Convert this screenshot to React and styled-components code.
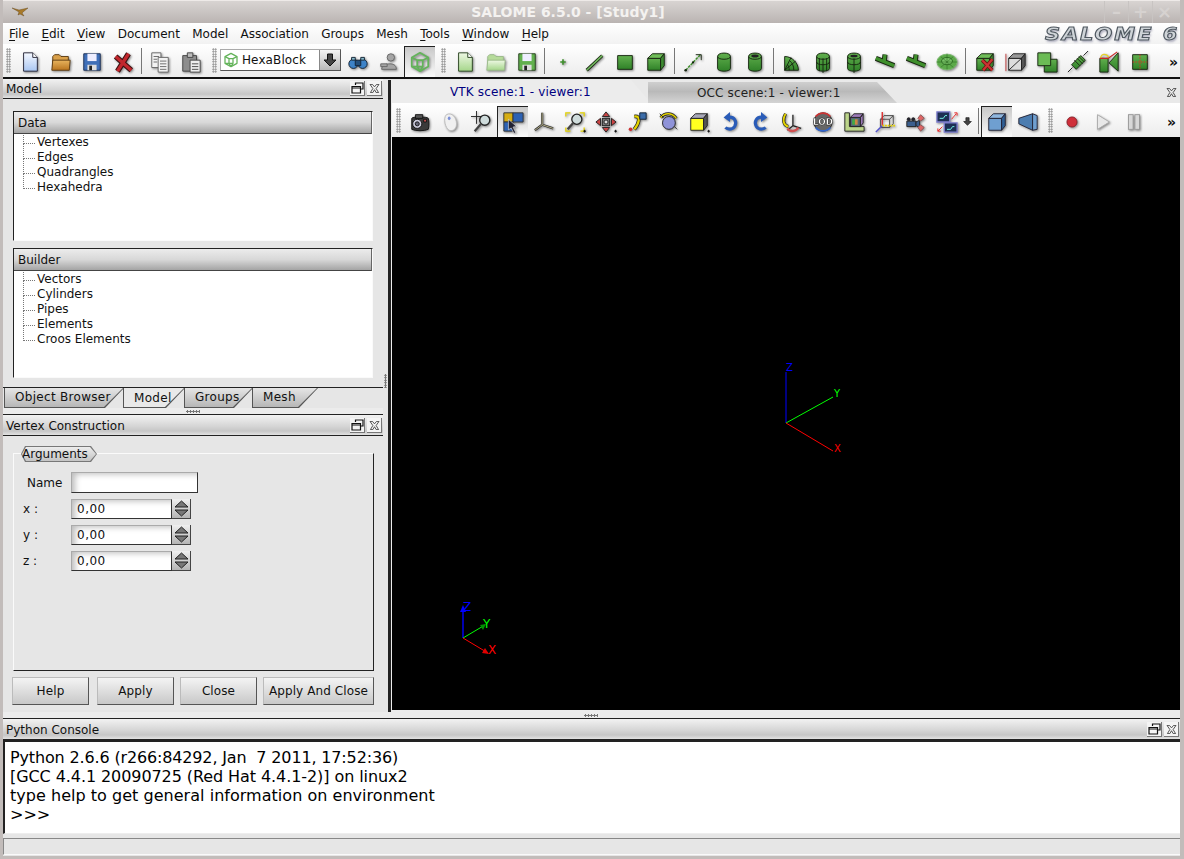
import React from "react";
import styled, { createGlobalStyle } from "styled-components";

const Global = createGlobalStyle`
  html, body { margin: 0; padding: 0; background: #c2bcba; }
  * { box-sizing: border-box; }
  #root { width: 1184px; height: 859px; overflow: hidden; }
`;

const Window = styled.div`
  width: 1184px;
  height: 859px;
  display: flex;
  flex-direction: column;
  background: #e6e6e6;
  font-family: "DejaVu Sans", sans-serif;
  font-size: 12px;
  color: #111;
  border-left: 3px solid #c2bcba;
  border-right: 4px solid #c2bcba;
  border-bottom: 3px solid #c2bcba;
  overflow: hidden;
`;

const TitleBar = styled.div`
  height: 23px;
  margin: 0 -4px 0 -3px;
  padding-right: 48px;
  flex: none;
  display: flex;
  align-items: center;
  position: relative;
  justify-content: center;
  background: linear-gradient(#d8d4d2, #bab4b2);
  border-top: 1px solid #eeeae8;
`;

const TitleText = styled.div`
  font-weight: bold;
  font-size: 14px;
  color: #f4f2f0;
`;

const TitleIcon = styled.div`
  position: absolute;
  left: 12px;
  top: 3px;
  line-height: 0;
`;

const WinButtons = styled.div`
  position: absolute;
  right: 8px;
  top: 0;
  display: flex;
`;

const WinButton = styled.div`
  width: 24px;
  height: 22px;
  text-align: center;
  font-size: 18px;
  line-height: 22px;
  font-weight: bold;
  color: #d6d2d0;
  border-left: 1px solid #c8c4c2;
`;

const MenuBar = styled.div`
  height: 21px;
  flex: none;
  display: flex;
  align-items: center;
  gap: 12.3px;
  padding-left: 6px;
  background: linear-gradient(#ffffff, #f2f2f2);
`;

const MenuItem = styled.span`
  line-height: 18px;
  u { text-underline-offset: 2px; }
`;

const Logo = styled.div`
  margin-left: auto;
  margin-right: 1px;
  font-weight: bold;
  font-style: italic;
  font-size: 17px;
  letter-spacing: 1.6px;
  white-space: nowrap;
  color: #cfd4d8;
  -webkit-text-stroke: 1px #4f5860;
  text-shadow: 1px 2px 2px #aab;
  transform: scaleX(1.23);
  transform-origin: right center;
`;

const Toolbar = styled.div`
  flex: none;
  height: ${(p) => p.$height}px;
  display: flex;
  align-items: center;
  padding-left: ${(p) => p.$pad}px;
  padding-top: 2px;
  background: linear-gradient(#ffffff, #ececec);
  border-bottom: ${(p) => (p.$line ? "2px solid #111" : "none")};
`;

const ToolButton = styled.div`
  width: 31px;
  height: 100%;
  flex: none;
  display: flex;
  align-items: center;
  justify-content: center;
  ${(p) =>
    p.$active &&
    `background: linear-gradient(#c8c8c8, #fafafa);
     border-left: 1px solid #222;
     border-top: 1px solid #222;`}
  svg { filter: drop-shadow(1px 1px 1px rgba(0, 0, 0, 0.45)); }
`;

const Sep = styled.div`
  flex: none;
  width: ${(p) => p.$w}px;
  height: 26px;
  margin-bottom: 2px;
  display: flex;
  justify-content: center;
  &::before { content: ""; width: 1px; background: #777; }
`;

const Grip = styled.div`
  flex: none;
  width: 5px;
  height: 25px;
  margin: 0 3px 2px ${(p) => p.$left || 0}px;
  background-image: radial-gradient(#8a8a8a 45%, transparent 55%);
  background-size: 2.5px 2.5px;
`;

const Combo = styled.div`
  width: 121px;
  height: 22px;
  flex: none;
  display: flex;
  align-items: stretch;
  background: #fff;
  border: 1px solid #999;
  border-color: #aaa #555 #555 #aaa;
  margin: 0 1px 4px 0;
`;

const ComboLabel = styled.div`
  flex: 1;
  display: flex;
  align-items: center;
  gap: 3px;
  padding-left: 2px;
  letter-spacing: 0.1px;
`;

const ComboArrow = styled.div`
  width: 21px;
  display: flex;
  align-items: center;
  justify-content: center;
  background: linear-gradient(#f4f4f4, #b8b8b8);
  border-left: 1px solid #888;
`;

const ToolSmall = styled.div`
  width: 10px;
  flex: none;
  display: flex;
  justify-content: center;
  margin-right: 3px;
`;

const More = styled.div`
  margin-left: auto;
  margin-right: ${(p) => p.$right}px;
  font-size: 14px;
  font-weight: bold;
  letter-spacing: -1px;
`;

const Workspace = styled.div`
  height: 633px;
  flex: none;
  display: flex;
`;

const LeftColumn = styled.div`
  width: 380px;
  flex: none;
  display: flex;
  flex-direction: column;
`;

const VerticalHandle = styled.div`
  width: 5px;
  flex: none;
  display: flex;
  align-items: center;
  justify-content: center;
  padding-bottom: 30px;
  &::before {
    content: "";
    width: 3px;
    height: 14px;
    background-image: radial-gradient(#777 50%, transparent 55%);
    background-size: 2.5px 2.5px;
  }
`;

const DockTitle = styled.div`
  height: ${(p) => p.$height}px;
  flex: none;
  display: flex;
  align-items: center;
  justify-content: space-between;
  padding: ${(p) => (p.$flush ? 0 : 1)}px 1px 0 3px;
  border-top: ${(p) => (p.$flush ? "none" : "1px solid #222")};
  border-bottom: 1px solid #222;
  background: linear-gradient(#f2f2f2, #d6d6d6 55%, #c6c6c6 80%, #e2e2e2);
`;

const DockButtons = styled.div`
  display: flex;
  gap: 2px;
  line-height: 0;
`;

const DockButton = styled.div`
  width: 15px;
  height: 15px;
  display: flex;
  align-items: center;
  justify-content: center;
  background: #f4f4f4;
  border-right: 1px solid #777;
  border-bottom: 1px solid #777;
`;

const ModelBody = styled.div`
  padding: 12px 10px 0 10px;
  display: flex;
  flex-direction: column;
  gap: 7px;
`;

const ListBox = styled.div`
  height: 130px;
  background: #fff;
  border: 1px solid #222;
  border-right-color: #fafafa;
  border-bottom-color: #fafafa;
`;

const ListHeader = styled.div`
  height: 22px;
  padding-left: 4px;
  display: flex;
  align-items: center;
  background: linear-gradient(#ececec, #d8d8d8 50%, #a4a4a4);
  border-bottom: 1px solid #444;
  border-right: 1px solid #666;
`;

const TreeList = styled.div`
  padding-top: 1px;
`;

const TreeItem = styled.div`
  height: 15px;
  line-height: 15px;
  padding-left: 23px;
  position: relative;
  &::before {
    content: "";
    position: absolute;
    left: 9px;
    top: ${(p) => (p.$first ? 0 : -7)}px;
    width: 11px;
    height: ${(p) => (p.$first ? 8 : 15)}px;
    border-left: 1px dotted #777;
    border-bottom: 1px dotted #777;
  }
`;

const TabRow = styled.div`
  margin-top: 9px;
  height: 21px;
  flex: none;
  display: flex;
  align-items: flex-start;
  border-top: 1px solid #222;
  padding-left: 1px;
`;

const Tab = styled.div`
  width: ${(p) => p.$w}px;
  height: 20px;
  margin-right: -1px;
  position: relative;
  background: #555;
  clip-path: polygon(0 0, 100% 0, calc(100% - 19px) 100%, 0 100%);
  &::before {
    content: "";
    position: absolute;
    inset: 0 0 1px 1px;
    background: ${(p) => (p.$on ? "#e9e9e9" : "linear-gradient(#e6e6e6, #b6b6b6)")};
    clip-path: polygon(0 0, calc(100% - 1px) 0, calc(100% - 20px) 100%, 0 100%);
  }
`;

const TabText = styled.span`
  position: relative;
  display: block;
  padding-left: ${(p) => p.$pad}px;
  line-height: 18px;
  letter-spacing: 0.3px;
  margin-top: ${(p) => (p.$on ? 1 : 0)}px;
`;

const DotHandle = styled.div`
  height: 6px;
  flex: none;
  display: flex;
  align-items: center;
  justify-content: ${(p) => (p.$center ? "center" : "flex-start")};
  padding-left: ${(p) => p.$pad || 0}px;
  background: #ececec;
  &::before {
    content: "";
    width: 14px;
    height: 3px;
    background-image: radial-gradient(#777 50%, transparent 55%);
    background-size: 3px 2.5px;
  }
`;

const FormBody = styled.div`
  padding: 17px 9px 0 10px;
  flex: 1;
  display: flex;
  flex-direction: column;
`;

const GroupBox = styled.div`
  height: 218px;
  position: relative;
  padding-top: 18px;
  border: 1px solid #222;
  border-top-color: #fafafa;
  border-left-color: #fafafa;
  display: flex;
  flex-direction: column;
  gap: 6px;
`;

const Legend = styled.div`
  position: absolute;
  left: 7px;
  top: -8px;
  width: 76px;
  height: 16px;
  background: #777;
  clip-path: polygon(4px 0, calc(100% - 6px) 0, 100% 50%, calc(100% - 6px) 100%, 4px 100%, 0 50%);
  &::before {
    content: "";
    position: absolute;
    inset: 1px;
    background: linear-gradient(#ececec, #c4c4c4);
    clip-path: polygon(4px 0, calc(100% - 6px) 0, 100% 50%, calc(100% - 6px) 100%, 4px 100%, 0 50%);
  }
`;

const LegendText = styled.span`
  position: relative;
  display: block;
  line-height: 17px;
  padding-left: 1px;
`;

const FormRow = styled.div`
  display: flex;
  align-items: center;
  height: ${(p) => p.$h}px;
`;

const FormLabel = styled.div`
  width: 57px;
  padding-left: ${(p) => p.$pad}px;
  flex: none;
`;

const TextField = styled.div`
  width: ${(p) => p.$w}px;
  height: 100%;
  padding-left: 5px;
  display: flex;
  align-items: center;
  background: #fff;
  letter-spacing: 0.5px;
  border: 1px solid;
  border-color: #aaa #333 #333 #aaa;
  box-shadow: inset 8px 6px 6px -5px #bbb;
`;

const SpinButtons = styled.div`
  width: 19px;
  height: 100%;
  background: linear-gradient(#f0f0f0, #b4b4b4);
  border-right: 1px solid #444;
  border-bottom: 1px solid #444;
  display: flex;
  align-items: center;
  justify-content: center;
`;

const ButtonRow = styled.div`
  margin-top: 6px;
  margin-left: -1px;
  display: flex;
  gap: 6px;
  height: 28px;
`;

const PushButton = styled.div`
  width: ${(p) => p.$w}px;
  margin-left: ${(p) => p.$ml || 0}px;
  display: flex;
  align-items: center;
  justify-content: center;
  letter-spacing: 0.1px;
  background: linear-gradient(#f4f4f4, #c8c8c8);
  border: 1px solid;
  border-color: #bbb #555 #555 #bbb;
`;

const ViewerColumn = styled.div`
  flex: 1;
  display: flex;
  flex-direction: column;
  border-left: 3px solid #222;
  margin-top: 1px;
  padding: 0 0 2px 1px;
  background: #ececec;
  min-width: 0;
`;

const ViewTabs = styled.div`
  height: 24px;
  flex: none;
  display: flex;
  border-bottom: 1px solid #fff;
  background: #e9e9e9;
`;

const ViewTab = styled.div`
  width: ${(p) => p.$w}px;
  margin-right: ${(p) => p.$mr}px;
  margin-top: ${(p) => (p.$on ? 0 : 2)}px;
  padding-left: ${(p) => p.$pad}px;
  line-height: ${(p) => (p.$on ? 24 : 22)}px;
  letter-spacing: 0.15px;
  color: ${(p) => (p.$on ? "#000080" : "#222")};
  background: ${(p) => (p.$on ? "#ececec" : "linear-gradient(#cfcfcf, #b9b9b9 45%, #d4d4d4)")};
  clip-path: polygon(0 0, calc(100% - 20px) 0, 100% 100%, 0 100%);
`;

const ViewClose = styled.div`
  margin-left: auto;
  margin-right: 3px;
  margin-top: 8px;
  line-height: 0;
`;

const Canvas = styled.div`
  flex: 1;
  background: #000;
  line-height: 0;
  svg { display: block; }
`;

const ConsoleText = styled.div`
  height: 94px;
  flex: none;
  padding: 6px 0 0 5px;
  background: #fff;
  border-top: 2px solid #222;
  border-left: 2px solid #222;
  border-bottom: 1px solid #eee;
  font-size: 16px;
  line-height: 19px;
  color: #000;
  white-space: pre;
`;

const ConsoleLine = styled.div`
  letter-spacing: ${(p) => p.$ls || 0}px;
`;

const StatusBar = styled.div`
  height: 17px;
  flex: none;
  margin-top: 4px;
  background: #e6e6e6;
  border-top: 1px solid #888;
  border-bottom: 1px solid #fafafa;
  border-left: 1px solid #888;
`;

// icon helpers
const K = "#16240f";
const stroke = { stroke: K, strokeWidth: 1, strokeLinejoin: "round" };
const gp = { ...stroke, fill: "url(#gr)" };

const page = (fill, line) => (
  <>
    <path d="M5 2h10l5 5v15H5z" fill={fill} stroke={line} />
    <path d="M15 2v5h5" fill="#fff" stroke={line} />
  </>
);
const folder = (a, b, line) => (
  <>
    <path d="M3 20V6l2-2h5l2 2h8v14z" fill={a} stroke={line} />
    <path d="M2 21l1-11h19l-1 11z" fill={b} stroke={line} />
  </>
);
const floppy = (fill, line) => (
  <>
    <path d="M3 3h18v18H3z" fill={fill} stroke={line} />
    <path d="M7 3h10v8H7z" fill="#eef" />
    <path d="M7 15h10v6H7z" fill="#ddd" />
    <path d="M9 16h3v5H9z" fill="#222" />
  </>
);
const cube = (front, top, side, line) => (
  <>
    <path d="M3 8h14v13H3z" fill={front} stroke={line} />
    <path d="M3 8l5-5h13l-4 5z" fill={top} stroke={line} />
    <path d="M17 8l4-5v13l-4 5z" fill={side} stroke={line} />
  </>
);
const cyl = (extra) => (
  <>
    <path d="M5 6c0-5 14-5 14 0v13c0 4-14 4-14 0z" {...gp} />
    <path d="M5 6c0 4 14 4 14 0" fill="none" stroke={K} />
    {extra}
  </>
);
const hexa = (
  <g fill="none" stroke="#63b35a" strokeWidth="1.9" strokeLinejoin="round">
    <path d="M3 7l9-5 9 5v10l-9 5-9-5z" />
    <path d="M3 7l6 3h6l6-3M9 10v7l-6 0M15 10v7h-6M15 17l-3 5M9 17l3 5M12 2v0" />
  </g>
);
const pipeT = (
  <g fill="none">
    <path d="M2 8l20 8M11 12l1-8" stroke={K} strokeWidth="5.5" />
    <path d="M2 8l20 8M11 12l1-8" stroke="#3f8f2c" strokeWidth="3.6" />
  </g>
);
const redX = (
  <g fill="none">
    <path d="M10 21l10-12M9 10l11 11" stroke="#611" strokeWidth="4" />
    <path d="M10 21l10-12M9 10l11 11" stroke="#c33" strokeWidth="2.4" />
  </g>
);
const plusDot = <path d="M21 22h3M22.500 20.500v3" stroke="#000" strokeWidth="1" />;

const ICONS = {
  new: page("url(#pb)", "#223"),
  open: folder("#d9a04a", "url(#or)", "#5b3a10"),
  save: floppy("#3f6fb8", "#1b2f55"),
  close: (
    <g fill="none">
      <path d="M6 22L18 3M4 6l17 15" stroke="#3a1010" strokeWidth="6" />
      <path d="M6 22L18 3M4 6l17 15" stroke="#c2272d" strokeWidth="3.6" />
    </g>
  ),
  copy: (
    <g fill="#f2f2f2" stroke="#666">
      <path d="M3 2h10v16H3z" />
      <path d="M10 7h11v16H10z" />
      <path d="M12 11h7M12 14h7M12 17h7M12 20h7M5 6h6M5 9h4M5 12h4" fill="none" />
    </g>
  ),
  paste: (
    <g stroke="#444">
      <path d="M3 5h15v17H3z" fill="#8d8d8d" />
      <path d="M8 2h6v5H8z" fill="#bbb" />
      <path d="M11 10h11v13H11z" fill="#eee" />
      <path d="M13 14h7M13 17h7M13 20h7" fill="none" />
    </g>
  ),
  bino: (
    <g stroke="#123" fill="#3d83c8">
      <circle cx="7" cy="14" r="5" />
      <circle cx="17" cy="14" r="5" />
      <path d="M9 10h6v6H9z" fill="#24507c" />
      <path d="M5 7h4v3H5zM15 7h4v3h-4z" fill="#8bc" />
    </g>
  ),
  person: (
    <g stroke="#666" fill="#a5a5a5">
      <circle cx="14" cy="7" r="4" />
      <path d="M4 20c0-5 6-6 9-6s7 1 7 6z" />
      <path d="M3 14h7v3H3z" />
    </g>
  ),
  hexa,
  gpage: page("url(#lg)", "#25401c"),
  gfolder: folder("#b6db9a", "url(#lg)", "#9ab98a"),
  gsave: floppy("#62b04e", "#25401c"),
  point: <path d="M12 9v6M9 12h6" stroke="#3f8f2c" strokeWidth="1.8" />,
  line: (
    <g fill="none">
      <path d="M4 21L21 5" stroke={K} strokeWidth="3.4" />
      <path d="M4 21L21 5" stroke="#73b85f" strokeWidth="1.8" />
    </g>
  ),
  square: <path d="M4 5h16v15H4z" {...gp} />,
  cube: cube("url(#gr)", "#6fbd58", "#3c8a30", K),
  vector: (
    <g fill="none">
      <path d="M4 21L20 4" stroke="#3f8f2c" strokeWidth="1.6" strokeDasharray="3 1" />
      <path d="M15 4h6v6" stroke={K} />
      <circle cx="4" cy="21" r="1.4" fill={K} />
      <circle cx="12" cy="12.500" r="1.200" fill={K} />
    </g>
  ),
  cyl: cyl(),
  cylHole: cyl(<ellipse cx="12" cy="5.500" rx="4" ry="1.600" fill="#222" />),
  quarter: (
    <g>
      <path d="M4 21V6c8 0 15 7 15 15z" {...gp} />
      <path d="M4 21l12-10M4 21l7-14M9 21c0-3-1-5-2-6M14 21c0-5-2-8-4-10" fill="none" stroke={K} />
    </g>
  ),
  cylGrid: cyl(<path d="M5 12c0 4 14 4 14 0M12 8v16M8 8v14M16 8v14" fill="none" stroke={K} />),
  cylGridHole: cyl(
    <>
      <ellipse cx="12" cy="5.500" rx="4" ry="1.400" fill="#222" />
      <path d="M5 12c0 4 14 4 14 0M12 8v16" fill="none" stroke={K} />
    </>
  ),
  pipeT,
  ellipsoid: (
    <g>
      <ellipse cx="12" cy="12" rx="11" ry="8.500" fill="#5caa4a" stroke="#7ab96c" />
      <ellipse cx="12" cy="11" rx="6" ry="4" fill="#79c268" stroke="#2c6a22" />
      <path d="M1 12h22M12 3v17M5 6l14 12M19 6L5 18" fill="none" stroke="#2c6a22" strokeWidth="0.6" />
    </g>
  ),
  cubeX: (
    <>
      {cube("url(#gr)", "#6fbd58", "#3c8a30", K)}
      {redX}
    </>
  ),
  split: (
    <g stroke="#222">
      <path d="M4 8h14v13H4z" fill="#ddd" />
      <path d="M4 8l5-5h13l-4 5z" fill="#999" />
      <path d="M18 8l4-5v13l-4 5z" fill="#555" />
      <path d="M4 21L18 8" />
      <path d="M1 3v19" stroke="#b33" />
    </g>
  ),
  twoSq: (
    <g>
      <path d="M9 9h14v14H9z" {...gp} />
      <path d="M2 2h14v14H2z" fill="#6bbb55" stroke={K} />
    </g>
  ),
  pipeFan: (
    <g>
      <path d="M5 15L15 5l5 5-10 10z" {...gp} />
      <path d="M8 10l6 6M11 8l6 6M13 6l6 6" stroke={K} fill="none" />
      <path d="M1 23l5-5M18 5l5-5" stroke="#111" />
    </g>
  ),
  lshape: (
    <g>
      <path d="M2 8h9v15H2z" {...gp} />
      <path d="M12 13L22 2v20z" {...gp} />
      <path d="M3 8c0-5 6-6 9-1" fill="none" stroke="#e6d22a" strokeWidth="1.4" />
      <path d="M2 8h9l10-7" fill="none" stroke="#c22" strokeWidth="1.2" />
    </g>
  ),
  sqCross: (
    <g>
      <path d="M4 4h16v16H4z" {...gp} />
      <path d="M4 12h16M12 4v16" stroke="#e22" strokeDasharray="1.5 1.5" fill="none" />
    </g>
  ),
  camera: (
    <g stroke="#111">
      <path d="M3 8c0-2 17-2 18 0 1 3 1 9 0 12-4 2-14 2-18 0z" fill="#3a3a3a" />
      <circle cx="9" cy="14" r="5" fill="#ccd" />
      <circle cx="9" cy="14" r="2.200" fill="#667" />
      <path d="M7 4h8v4H7z" fill="#555" />
      <path d="M16 9h3v3h-3z" fill="#c55" />
    </g>
  ),
  mouse: (
    <g>
      <path d="M7 4c6-3 11 3 11 10 0 7-5 8-8 7-4-2-7-13-3-17z" fill="#f0f0f0" stroke="#bbb" />
      <ellipse cx="10" cy="8" rx="1.500" ry="2" fill="#7b8fd6" />
    </g>
  ),
  crossZoom: (
    <g fill="none" stroke="#222">
      <path d="M0 6h14M6 0v14" />
      <circle cx="15" cy="10" r="5.500" fill="#cfdcdc" strokeWidth="1.500" />
      <path d="M11 14l-7 8" strokeWidth="2.400" stroke="#444" />
    </g>
  ),
  select: (
    <g>
      <path d="M2 2h10v10H2z" fill="#d6ad12" stroke="#333" />
      <path d="M12 2h11v10H12z" fill="#2d62b4" stroke="#333" />
      <path d="M2 12h10v10H2z" fill="#2d62b4" stroke="#333" />
      <path d="M7 9l9 8-4 .5 3 6-2 1-3-6-3 2z" fill="#223" stroke="#fff" strokeWidth="0.6" />
    </g>
  ),
  trihedron: (
    <g fill="none">
      <path d="M10 2v13L2 21M10 15l12 4" stroke="#333" strokeWidth="2.400" />
      <path d="M10 2v13L2 21M10 15l12 4" stroke="#b9b38a" strokeWidth="1" />
    </g>
  ),
  zoomRect: (
    <g fill="none">
      <path d="M2 6V2h5M17 2h5v4M2 18v4h5M22 18v4h-4" stroke="#e3d200" strokeWidth="1.400" />
      <circle cx="14" cy="9" r="5.500" fill="#cfdcdc" stroke="#222" strokeWidth="1.400" />
      <path d="M10 13l-6 7" stroke="#444" strokeWidth="2.600" />
      {plusDot}
    </g>
  ),
  pan: (
    <g stroke="#222">
      <path d="M12 1l4 5h-8zM12 23l4-5H8zM1 12l5-4v8zM23 12l-5-4v8z" fill="#c44" />
      <rect x="8" y="8" width="8" height="8" fill="#777" />
      <circle cx="12" cy="12" r="2.200" fill="#ddd" />
      {plusDot}
    </g>
  ),
  rotatePt: (
    <g>
      <path d="M9 6c8-1 5 8 0 14" fill="none" stroke="#222" strokeWidth="4" />
      <path d="M9 6c8-1 5 8 0 14" fill="none" stroke="#e3d200" strokeWidth="2.400" />
      <path d="M15 2h7v7h-7z" fill="#3b6ca8" stroke="#123" />
      <circle cx="5" cy="20" r="2" fill="#c33" />
    </g>
  ),
  sphere: (
    <g>
      <circle cx="13" cy="13" r="7" fill="#8f93d8" stroke="#222" />
      <path d="M4 7c5-6 13-5 17 1" fill="none" stroke="#222" strokeWidth="3.400" />
      <path d="M4 7c5-6 13-5 17 1" fill="none" stroke="#e3d200" strokeWidth="1.800" />
      <path d="M3 3l4 4M22 20l-3-3" stroke="#222" />
    </g>
  ),
  cubeY: (
    <>
      {cube("#ffff20", "#a8a8b8", "#555", "#222")}
      {plusDot}
    </>
  ),
  undo: (
    <g fill="none">
      <path d="M9 7c8-2 11 5 8 10-3 4-8 3-10 1" stroke="#2a5cb8" strokeWidth="3.400" />
      <path d="M12 1L5 7l7 5z" fill="#2a5cb8" />
    </g>
  ),
  redo: (
    <g fill="none">
      <path d="M15 7c-8-2-11 5-8 10 3 4 8 3 10 1" stroke="#2a5cb8" strokeWidth="3.400" />
      <path d="M12 1l7 6-7 5z" fill="#2a5cb8" />
    </g>
  ),
  rotAxes: (
    <g fill="none">
      <path d="M5 3C1 10 3 16 8 17" stroke="#222" strokeWidth="3.400" />
      <path d="M5 3C1 10 3 16 8 17" stroke="#e3d200" strokeWidth="2" />
      <path d="M13 4v12l-6 5M13 16l9 3" stroke="#222" strokeWidth="1.400" />
      <path d="M7 19c3 4 9 4 12-1" stroke="#d05050" strokeWidth="2.600" />
    </g>
  ),
  lod: (
    <g>
      <circle cx="12" cy="12" r="10" fill="#666" stroke="#222" />
      <path d="M4 6c4-5 12-5 16 0" stroke="#c33" strokeWidth="2" fill="none" />
      <path d="M4 18c4 5 12 5 16 0" stroke="#36c" strokeWidth="2" fill="none" />
      <text x="12" y="15.500" textAnchor="middle" fontSize="9.500" fontWeight="bold" fontFamily="DejaVu Sans, sans-serif" fill="#fff" stroke="#000" strokeWidth="0.4">LOD</text>
    </g>
  ),
  ruler: (
    <g>
      <path d="M2 2h5v15h16v5H2z" fill="#bcd58a" stroke="#222" />
      <path d="M8 7h11v10H8z" fill="#567" stroke="#222" />
      <path d="M8 7l4-4h10l-3 4zM19 7l3-4v10l-3 4z" fill="#9b7ab8" stroke="#222" />
      <path d="M10 9h3v6h-3z" fill="#4a4" />
      <path d="M13 9h3v6h-3z" fill="#c84" />
    </g>
  ),
  clip: (
    <g fill="none">
      <path d="M7 9h10v9H7zM7 9l4-4h10l-4 4M17 18l4-4V5" stroke="#444" />
      <path d="M9 1v15" stroke="#d22" strokeWidth="1.400" />
      <path d="M9 16h14" stroke="#e6d200" strokeWidth="2" strokeDasharray="2 1" />
      <path d="M9 16L2 23" stroke="#55c" strokeWidth="1.600" />
    </g>
  ),
  cam2: (
    <g stroke="#222">
      <path d="M2 11h10v6H2z" fill="#3b5f8e" />
      <path d="M12 12l4-2v8l-4-2z" fill="#3b5f8e" />
      <circle cx="4" cy="9" r="1.600" fill="#223" />
      <circle cx="9" cy="9" r="1.600" fill="#223" />
      <path d="M17 4l4 4-4 3-3-3zM17 15l4 3-4 4-3-4z" fill="#d66" stroke="#855" />
    </g>
  ),
  squares: (
    <g>
      <path d="M1 1h14v11H1z" fill="#1d2f52" stroke="#7f7fd0" strokeWidth="1.400" />
      <path d="M9 13h14v10H9z" fill="#1d2f52" stroke="#7f7fd0" strokeWidth="1.400" />
      <path d="M4 8h4l2-3h2M12 20h4l2-3h2" stroke="#7fe" fill="none" />
      <path d="M17 9l5-6M20 2h3v3M2 22l5-5M2 19v3h3" stroke="#e22" fill="none" />
    </g>
  ),
  blueCube: cube("#6f9fd0", "#8fb6de", "#2f5f94", "#223"),
  bluePersp: (
    <g stroke="#223">
      <path d="M2 8l15-5v18L2 14z" fill="#4c7db0" />
      <path d="M17 3l5 2v15l-5 1z" fill="#6f9fd0" />
    </g>
  ),
  rec: <circle cx="12" cy="12" r="5.500" fill="#cf2f3a" stroke="#8a2028" />,
  play: <path d="M6 4l13 8-13 8z" fill="#e8e8e8" stroke="#aaa" />,
  pause: (
    <g fill="#d8d8d8" stroke="#999">
      <rect x="6" y="4" width="5" height="16" />
      <rect x="13" y="4" width="5" height="16" />
    </g>
  ),
};

const Defs = () => (
  <svg width="0" height="0" style={{ position: "absolute" }}>
    <defs>
      <linearGradient id="gr" x1="0" y1="0" x2="0" y2="1">
        <stop offset="0" stopColor="#62b04e" />
        <stop offset="1" stopColor="#2f8128" />
      </linearGradient>
      <linearGradient id="lg" x1="0" y1="0" x2="0" y2="1">
        <stop offset="0" stopColor="#eef8e4" />
        <stop offset="1" stopColor="#a5d68a" />
      </linearGradient>
      <linearGradient id="pb" x1="0" y1="0" x2="0" y2="1">
        <stop offset="0" stopColor="#f6f9ff" />
        <stop offset="1" stopColor="#a9c6f2" />
      </linearGradient>
      <linearGradient id="or" x1="0" y1="0" x2="0" y2="1">
        <stop offset="0" stopColor="#e8b45e" />
        <stop offset="1" stopColor="#b9741e" />
      </linearGradient>
    </defs>
  </svg>
);

const Icon = ({ name, size = 22 }) => (
  <svg width={size} height={size} viewBox="0 0 24 24">
    {ICONS[name]}
  </svg>
);

const FloatIcon = () => (
  <svg width="13" height="13" viewBox="0 0 13 13" fill="none" stroke="#111" strokeWidth="1.200">
    <path d="M4.500 3V1h7.500v6h-3M1 4.500h8.500V11H1zM1 6h8.500" />
  </svg>
);

const CloseIcon = () => (
  <svg width="11" height="9" viewBox="0 0 13 11" fill="none" stroke="#333">
    <path d="M1 .5h3l2.500 3 2.500-3h3L8.500 5.500l3 5h-3L6.500 7l-2 3.500h-3l3-5z" />
  </svg>
);

const DownArrow = ({ size = 14 }) => (
  <svg width={size} height={size} viewBox="0 0 14 14">
    <path d="M4.500 1h5v6H13l-6 6-6-6h3.500z" fill="#444" stroke="#111" />
  </svg>
);

const SpinArrows = () => (
  <svg width="15" height="17" viewBox="0 0 15 17">
    <path d="M7.500 1L14 7H1z" fill="#777" stroke="#222" />
    <path d="M7.500 16L14 10H1z" fill="#777" stroke="#222" />
  </svg>
);

const BirdIcon = () => (
  <svg width="16" height="16" viewBox="0 0 16 16">
    <path d="M0 4l7 2 9-2-5 4-1 1 2 3-4-2-2 1 1-3z" fill="#a87a2a" stroke="#5a3c10" strokeWidth="0.4" />
  </svg>
);

const Axes = ({ o, z, y, x, labels, heavy }) => (
  <g fontFamily="DejaVu Sans, sans-serif" fontSize={heavy ? 12 : 10}>
    <path d={`M${o[0]} ${o[1]}L${z[0]} ${z[1]}`} stroke="#0000ff" strokeWidth={heavy ? 1.4 : 1} />
    <path d={`M${o[0]} ${o[1]}L${y[0]} ${y[1]}`} stroke="#00ff00" />
    <path d={`M${o[0]} ${o[1]}L${x[0]} ${x[1]}`} stroke="#ff0000" />
    {heavy && (
      <>
        <path d={`M${z[0] - 3} ${z[1] + 5}h6l-3 -7z`} fill="#0000ff" />
        <path d={`M${y[0] + 1} ${y[1] - 1}l-6 1 3 5z`} fill="#009000" />
        <path d={`M${x[0] + 1} ${x[1] + 1}l-7 -1 3 -5z`} fill="#e00000" />
      </>
    )}
    <text x={labels.z[0]} y={labels.z[1]} fill="#0000ff">Z</text>
    <text x={labels.y[0]} y={labels.y[1]} fill="#00ff00">Y</text>
    <text x={labels.x[0]} y={labels.x[1]} fill="#ff0000">X</text>
  </g>
);

const renderTool = (t, i) => {
  if (t.startsWith("|")) return <Sep key={i} $w={Number(t.slice(1))} />;
  if (t.startsWith("grip")) return <Grip key={i} $left={Number(t.slice(4))} />;
  if (t === "down") return <ToolSmall key={i}><DownArrow size={9} /></ToolSmall>;
  if (t === "combo")
    return (
      <Combo key={i}>
        <ComboLabel>
          <Icon name="hexa" size={16} />
          HexaBlock
        </ComboLabel>
        <ComboArrow><DownArrow /></ComboArrow>
      </Combo>
    );
  const active = t.startsWith("*");
  return (
    <ToolButton key={i} $active={active}>
      <Icon name={active ? t.slice(1) : t} />
    </ToolButton>
  );
};

const mainTools = ["new", "open", "save", "close", "|6", "copy", "paste", "grip6", "combo", "bino", "person", "*hexa", "grip6", "gpage", "gfolder", "gsave", "|5", "point", "line", "square", "cube", "|6", "vector", "cyl", "cylHole", "|6", "quarter", "cylGrid", "cylGridHole", "pipeT", "pipeT", "ellipsoid", "|7", "cubeX", "split", "twoSq", "pipeFan", "lshape", "sqCross"];
const viewTools = ["camera", "mouse", "crossZoom", "*select", "trihedron", "zoomRect", "pan", "rotatePt", "sphere", "cubeY", "undo", "redo", "rotAxes", "lod", "ruler", "clip", "cam2", "squares", "down", "|6", "*blueCube", "bluePersp", "grip5", "rec", "play", "pause"];

const menu = [["F", "ile"], ["E", "dit"], ["V", "iew"], ["", "Document"], ["", "Model"], ["", "Association"], ["", "Groups"], ["", "Mesh"], ["T", "ools"], ["W", "indow"], ["H", "elp"]];

const DockHead = ({ title }) => (
  <>
    {title}
    <DockButtons>
      <DockButton><FloatIcon /></DockButton>
      <DockButton><CloseIcon /></DockButton>
    </DockButtons>
  </>
);

const List = ({ title, items }) => (
  <ListBox>
    <ListHeader>{title}</ListHeader>
    <TreeList>
      {items.map((it, i) => (
        <TreeItem key={it} $first={i === 0}>{it}</TreeItem>
      ))}
    </TreeList>
  </ListBox>
);

const tabs = [
  { t: "Object Browser", w: 120, pad: 11 },
  { t: "Model", w: 62, pad: 11, on: true },
  { t: "Groups", w: 69, pad: 11 },
  { t: "Mesh", w: 66, pad: 11 },
];

export default function App() {
  return (
    <Window>
      <Global />
      <Defs />
      <TitleBar>
        <TitleIcon><BirdIcon /></TitleIcon>
        <TitleText>SALOME 6.5.0 - [Study1]</TitleText>
        <WinButtons>
          <WinButton>–</WinButton>
          <WinButton>+</WinButton>
          <WinButton>×</WinButton>
        </WinButtons>
      </TitleBar>
      <MenuBar>
        {menu.map(([u, rest]) => (
          <MenuItem key={u + rest}>{u && <u>{u}</u>}{rest}</MenuItem>
        ))}
        <Logo>SALOME 6</Logo>
      </MenuBar>
      <Toolbar $height={35} $pad={3} $line>
        <Grip />
        {mainTools.map(renderTool)}
        <More $right={3}>»</More>
      </Toolbar>
      <Workspace>
        <LeftColumn>
          <DockTitle $height={20} $flush><DockHead title="Model" /></DockTitle>
          <ModelBody>
            <List title="Data" items={["Vertexes", "Edges", "Quadrangles", "Hexahedra"]} />
            <List title="Builder" items={["Vectors", "Cylinders", "Pipes", "Elements", "Croos Elements"]} />
          </ModelBody>
          <TabRow>
            {tabs.map((t) => (
              <Tab key={t.t} $w={t.w} $on={t.on}>
                <TabText $pad={t.pad} $on={t.on}>{t.t}</TabText>
              </Tab>
            ))}
          </TabRow>
          <DotHandle $center />
          <DockTitle $height={22}><DockHead title="Vertex Construction" /></DockTitle>
          <FormBody>
            <GroupBox>
              <Legend><LegendText>Arguments</LegendText></Legend>
              <FormRow $h={21}>
                <FormLabel $pad={13}>Name</FormLabel>
                <TextField $w={127} />
              </FormRow>
              {["x :", "y :", "z :"].map((l) => (
                <FormRow key={l} $h={20}>
                  <FormLabel $pad={9}>{l}</FormLabel>
                  <TextField $w={101}>0,00</TextField>
                  <SpinButtons><SpinArrows /></SpinButtons>
                </FormRow>
              ))}
            </GroupBox>
            <ButtonRow>
              <PushButton $w={77}>Help</PushButton>
              <PushButton $w={77} $ml={2}>Apply</PushButton>
              <PushButton $w={77}>Close</PushButton>
              <PushButton $w={111}>Apply And Close</PushButton>
            </ButtonRow>
          </FormBody>
        </LeftColumn>
        <VerticalHandle />
        <ViewerColumn>
          <ViewTabs>
            <ViewTab $on $w={259} $mr={-3} $pad={58}>VTK scene:1 - viewer:1</ViewTab>
            <ViewTab $w={249} $mr={0} $pad={49}>OCC scene:1 - viewer:1</ViewTab>
            <ViewClose><CloseIcon /></ViewClose>
          </ViewTabs>
          <Toolbar $height={33} $pad={4}>
            <Grip />
            {viewTools.map(renderTool)}
            <More $right={5}>»</More>
          </Toolbar>
          <Canvas>
            <svg width="788" height="573" viewBox="392 137 788 573">
              <Axes o={[786, 423]} z={[786, 372]} y={[833, 397]} x={[833, 451]} labels={{ z: [786, 371], y: [834, 397], x: [834, 452] }} />
              <Axes heavy o={[463, 638]} z={[463, 607]} y={[485, 625]} x={[488, 653]} labels={{ z: [463, 611], y: [483, 628], x: [488, 654] }} />
            </svg>
          </Canvas>
        </ViewerColumn>
      </Workspace>
      <DotHandle $pad={581} />
      <DockTitle $height={22}><DockHead title="Python Console" /></DockTitle>
      <ConsoleText>
        <ConsoleLine $ls={-0.15}>Python 2.6.6 (r266:84292, Jan  7 2011, 17:52:36)</ConsoleLine>
        <ConsoleLine $ls={-0.08}>[GCC 4.4.1 20090725 (Red Hat 4.4.1-2)] on linux2</ConsoleLine>
        <ConsoleLine $ls={0.03}>type help to get general information on environment</ConsoleLine>
        <ConsoleLine>{">>>"}</ConsoleLine>
      </ConsoleText>
      <StatusBar />
    </Window>
  );
}
